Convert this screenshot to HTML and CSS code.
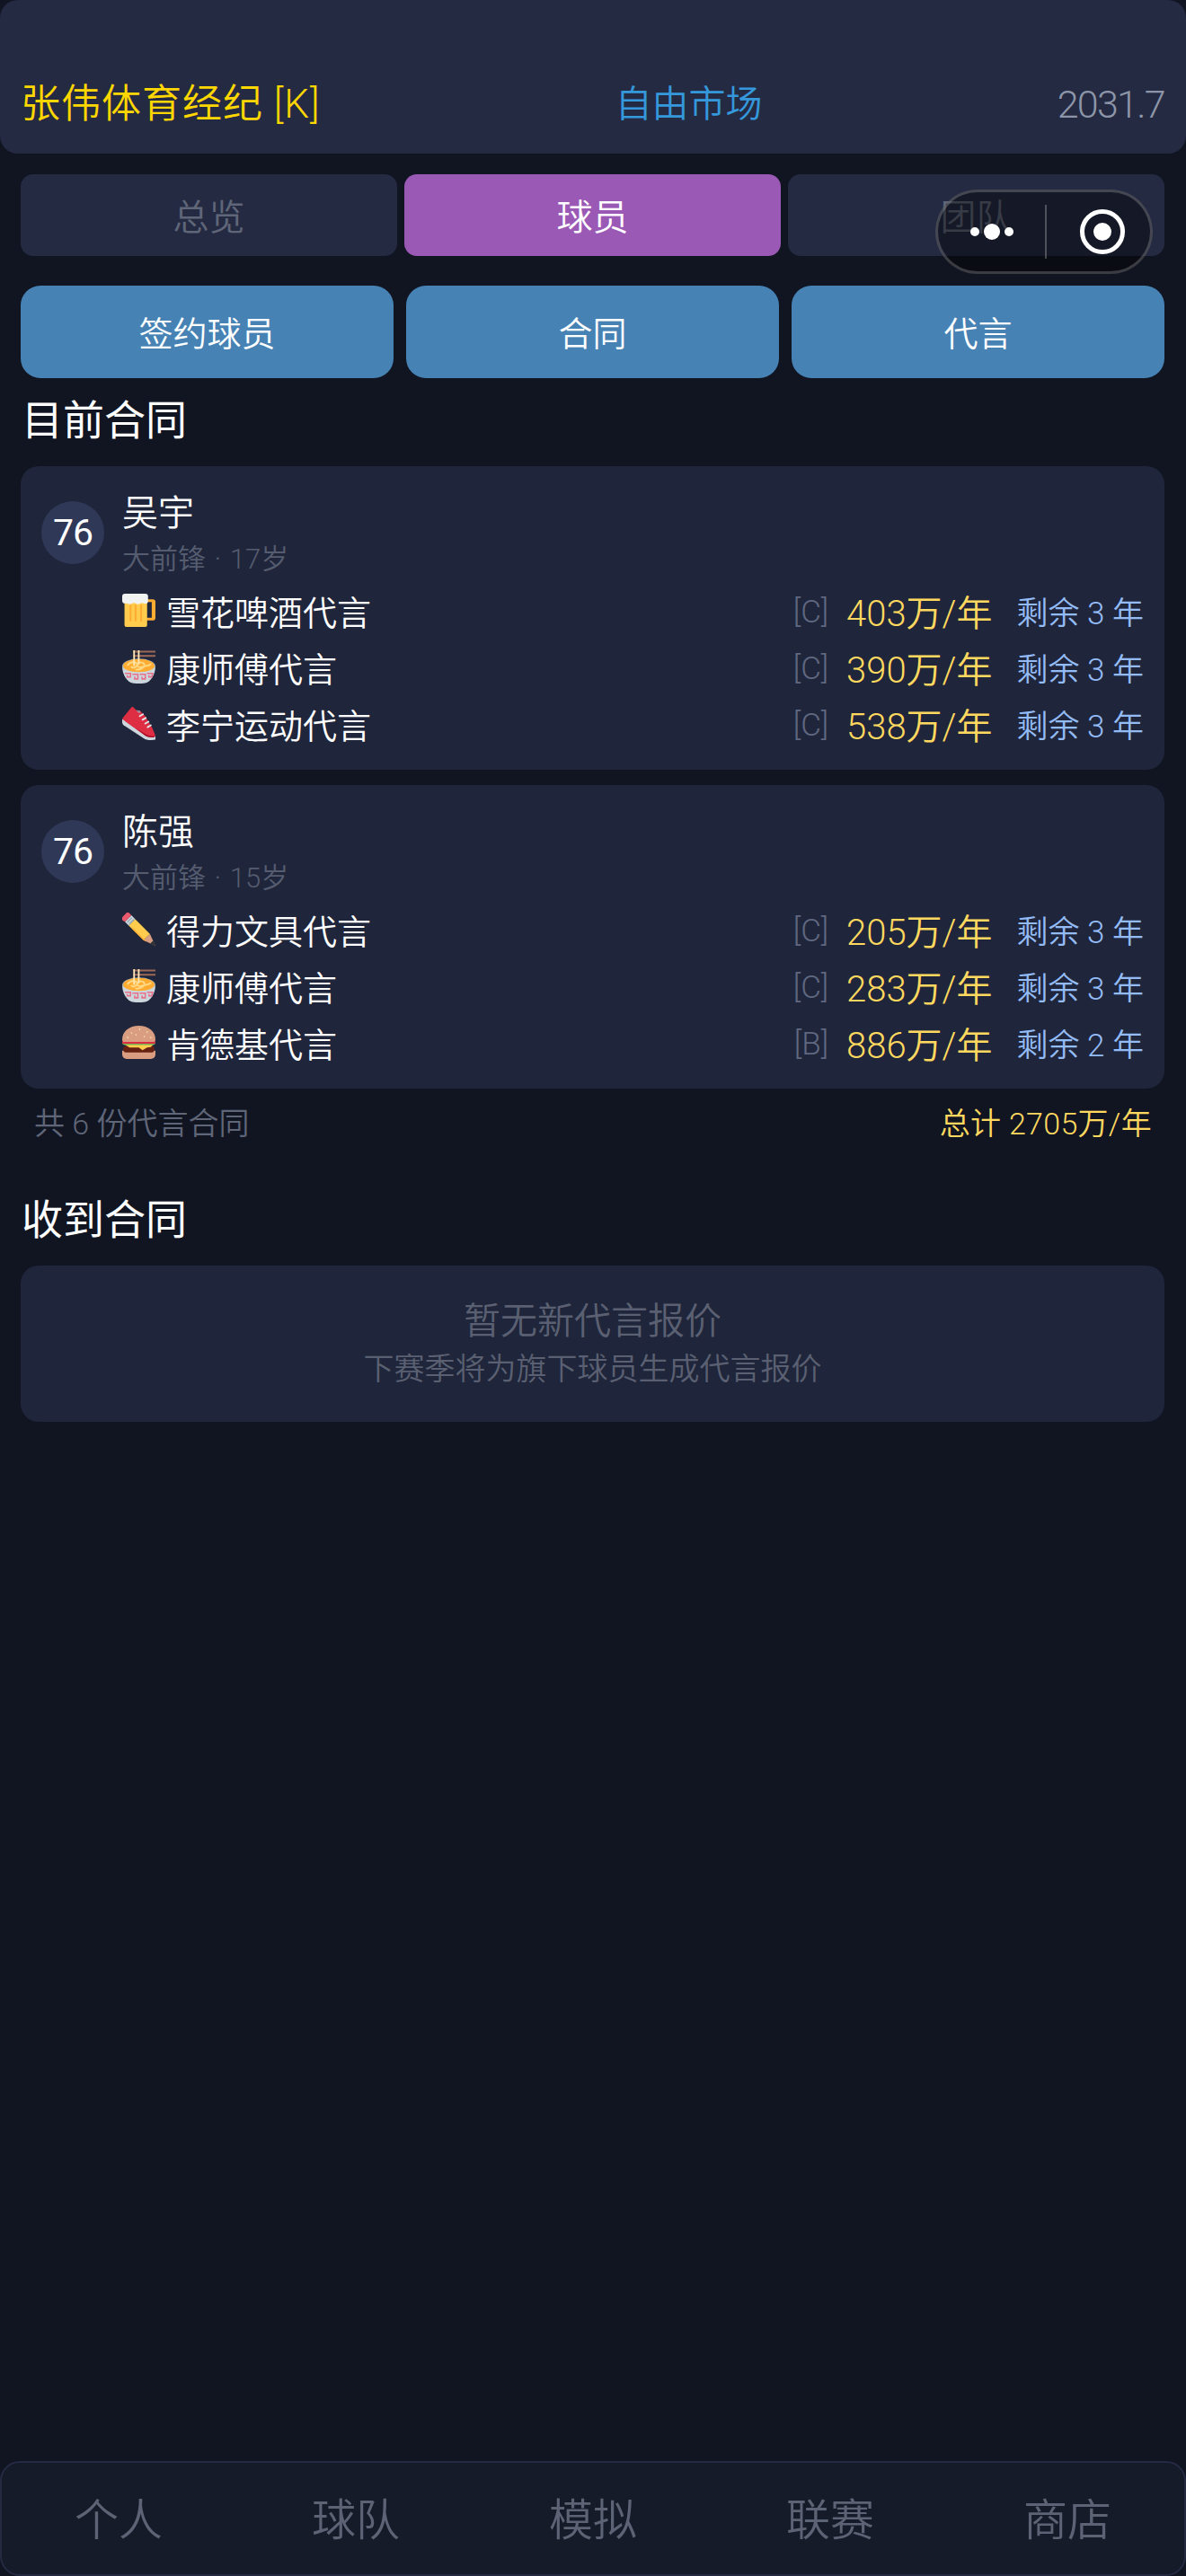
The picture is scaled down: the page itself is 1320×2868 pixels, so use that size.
FILE: index.html
```html
<!DOCTYPE html>
<html lang="zh">

<head>
    <meta charset="utf-8">
    <meta name="viewport" content="width=device-width, initial-scale=1.0">
    <title>代言</title>
    <link rel="stylesheet" href="styles.css">
</head>

<body>
    <!-- emoji -->
    <svg class="defs" width="0" height="0">
        <symbol id="beer" viewBox="0 0 36 36">
            <path fill="#FFAC33" d="M26 6h7a3 3 0 0 1 3 3v17a3 3 0 0 1-3 3h-7v-3h6V9h-6z"/>
            <path fill="#FFCC4D" d="M2.500 8h24.500v26a2 2 0 0 1-2 2H4.500a2 2 0 0 1-2-2z"/>
            <path fill="#FFAC33" d="M8 12h2v18H8zM13.500 12h2v18h-2zM19.500 12h2v18h-2z"/>
            <path fill="#F1F2F2" d="M3 0h22a3 3 0 0 1 3 3v6a3 3 0 0 1-3 2c-1.500 0-2-1-3.500-1S19 11.500 17 11.500 15 10 13 10s-3 1.500-5 1.500c-1.500 0-2-1-3-1H3a3 3 0 0 1-3-3V3a3 3 0 0 1 3-3z"/>
        </symbol>
        <symbol id="ramen" viewBox="0 0 36 36">
            <path fill="#9E6857" d="M12 0.500h24v2H12zM12 5h24v2H12z"/>
            <path fill="#CCD6DD" d="M0 17h36c0 9-5 17-11 18.500-4 .8-10 .8-14 0C5 34 0 26 0 17z"/>
            <path fill="#99AAB5" d="M0 17a18 8 0 0 1 36 0 18 5 0 0 1-36 0z"/>
            <path fill="#FFAC33" d="M1 17a17 7.500 0 0 1 34 0c0 3.500-7 6.500-17 6.500S1 20.500 1 17z"/>
            <path fill="none" stroke="#FFD983" stroke-width="1.800" stroke-linecap="round" d="M6 16c3-4 9-4 10-1s-4 5-6 3M15 21c5 0 9-2 9-5s-5-4-7-1 2 4 5 3 7-1 9-3"/>
            <path fill="#FFE8B6" d="M12 0h1.800v17H12zM17 0h1.800v15H17z"/>
            <path fill="none" stroke="#E8718A" stroke-width="1.500" d="M3 25h6v4H5.500v-2M11 26h6v5h-3.500v-2.500M19 26h6v5h-3.500v-2.500M27 25h6l-1 4h-3v-2"/>
        </symbol>
        <symbol id="shoe" viewBox="0 0 36 36">
            <path fill="#CCD6DD" d="M0 13.500v3c0 1.500 1 3 2.500 4L24 34.500c3 1.800 8 1.800 12 1V32L6 12z"/>
            <path fill="#DD2E44" d="M10 .5c.6-.7 1.500-.7 2.200 0L15 3.500c1 1 2.500 1 4 .5l5.500 5.500 8 13 3 7.500c.6 2-.5 3-2.500 3-3 0-6-.5-8.500-2L3 15.500c-1.500-1-3-2-2.700-3z"/>
            <path fill="#A0041E" d="M14 22.500l12 7.500c3 1.500 6 2 9 1.500l.5 1c-3 1-7 .5-10-1z" opacity=".8"/>
            <path fill="#99AAB5" d="M15 3.500l4 .5 1 2-2 1z" opacity=".7"/>
            <path fill="none" stroke="#E1E8ED" stroke-width="1.800" stroke-linecap="round" d="M19 10l3.500-2M22 14l3.500-2M25 18l3.500-2M27.500 22l3.500-2"/>
        </symbol>
        <symbol id="pencil" viewBox="0 0 36 36">
            <path fill="#D99E82" d="M23 30l7-7 6 13z"/>
            <path fill="#292F33" d="M33.500 30.500l-3 3 5.500 2.500z"/>
            <path fill="#FFCC4D" d="M7 14l7-7 16 16-7 7z"/>
            <path fill="#FFAC33" d="M10.500 17.500l1-1 15 15-3.500-1.500z"/>
            <path fill="#CCD6DD" d="M3 10l7-7 4 4-7 7z"/>
            <path fill="#99AAB5" d="M5 10l5-5 1 1-5 5zM7 12l5-5 1 1-5 5z"/>
            <path fill="#EA596E" d="M4.500.5L.5 4.500c-1 1.500-1 3 0 4L3 10l7-7L7.500.5c-1-1-2-1-3 0z"/>
        </symbol>
        <symbol id="burger" viewBox="0 0 36 36">
            <path fill="#D99E82" d="M0 27h36v4c0 3-2 5-5 5H5c-3 0-5-2-5-5z"/>
            <path fill="#662113" d="M1 25c0-1 1-3 3-3h28c2 0 3 2 3 3 0 2-1 4-3 4H4c-2 0-3-2-3-4z"/>
            <path fill="#FFCC4D" d="M2 20h32l-3 3-4 .5-5 3-4-3H8z"/>
            <path fill="#77B255" d="M0 18.500c0-1 1-1.500 2-1.500h32c1 0 2 .5 2 1.500S35 21 33 21H3c-2 0-3-1.500-3-2.500z"/>
            <path fill="#DD2E44" d="M1 16h34a2 2 0 0 1 0 3.500H1A2 2 0 0 1 1 16z"/>
            <path fill="#D99E82" d="M0 15C0 6 8 0 18 0s18 6 18 15c0 1.500-1 2.500-2 2.500H2c-1 0-2-1-2-2.500z"/>
            <path fill="#FFE8B6" d="M9 7l2 .5-1 1.500zM18 3l2 .5-1 1.500zM26 6l2 .5-1 1.500zM5 12l2 .5-1 1.500zM14 9l2 .5-1 1.500zM23 11l2 .5-1 1.500zM30 12l2 .5-1 1.500z"/>
        </symbol>
    </svg>

    <header class="topbar">
        <span class="agency">张伟体育经纪 [K]</span>
        <span class="market">自由市场</span>
        <span class="date">2031.7</span>
    </header>

    <nav class="tabs">
        <button class="tab">总览</button>
        <button class="tab valgt">球员</button>
        <button class="tab">团队</button>
    </nav>

    <div class="capsule">
        <span class="dots"><i></i><i class="big"></i><i></i></span>
        <span class="divider"></span>
        <span class="ring"><i></i></span>
    </div>

    <div class="actions">
        <button class="action">签约球员</button>
        <button class="action">合同</button>
        <button class="action">代言</button>
    </div>

    <main>
        <h2>目前合同</h2>

        <article class="player">
            <div class="player-head">
                <span class="rating">76</span>
                <div class="player-info">
                    <h3>吴宇</h3>
                    <p class="meta">大前锋 · 17岁</p>
                </div>
            </div>
            <div class="deal">
                <svg class="emoji"><use href="#beer"/></svg>
                <span class="brand">雪花啤酒代言</span>
                <span class="grade">[C]</span>
                <span class="price">403万/年</span>
                <span class="left">剩余 3 年</span>
            </div>
            <div class="deal">
                <svg class="emoji"><use href="#ramen"/></svg>
                <span class="brand">康师傅代言</span>
                <span class="grade">[C]</span>
                <span class="price">390万/年</span>
                <span class="left">剩余 3 年</span>
            </div>
            <div class="deal">
                <svg class="emoji"><use href="#shoe"/></svg>
                <span class="brand">李宁运动代言</span>
                <span class="grade">[C]</span>
                <span class="price">538万/年</span>
                <span class="left">剩余 3 年</span>
            </div>
        </article>

        <article class="player">
            <div class="player-head">
                <span class="rating">76</span>
                <div class="player-info">
                    <h3>陈强</h3>
                    <p class="meta">大前锋 · 15岁</p>
                </div>
            </div>
            <div class="deal">
                <svg class="emoji"><use href="#pencil"/></svg>
                <span class="brand">得力文具代言</span>
                <span class="grade">[C]</span>
                <span class="price">205万/年</span>
                <span class="left">剩余 3 年</span>
            </div>
            <div class="deal">
                <svg class="emoji"><use href="#ramen"/></svg>
                <span class="brand">康师傅代言</span>
                <span class="grade">[C]</span>
                <span class="price">283万/年</span>
                <span class="left">剩余 3 年</span>
            </div>
            <div class="deal">
                <svg class="emoji"><use href="#burger"/></svg>
                <span class="brand">肯德基代言</span>
                <span class="grade">[B]</span>
                <span class="price">886万/年</span>
                <span class="left">剩余 2 年</span>
            </div>
        </article>

        <div class="summary">
            <span>共 6 份代言合同</span>
            <span class="total">总计 2705万/年</span>
        </div>

        <h2 class="second">收到合同</h2>

        <section class="empty">
            <p class="empty-title">暂无新代言报价</p>
            <p class="empty-sub">下赛季将为旗下球员生成代言报价</p>
        </section>
    </main>

    <footer class="bottom">
        <span>个人</span>
        <span>球队</span>
        <span>模拟</span>
        <span>联赛</span>
        <span>商店</span>
    </footer>
</body></html>
```
FILE: styles.css
```css
* {
    box-sizing: border-box;
}

body {
    margin: 0;
    height: 2868px;
    position: relative;
    overflow: hidden;
    display: flex;
    flex-direction: column;
    background-color: #111522;
    color: #fff;
    font-family: "Roboto", "Noto Sans CJK SC", sans-serif;
    font-weight: 350;
}

.defs {
    position: absolute;
}

button {
    border: none;
    color: #fff;
    font-family: inherit;
    font-weight: inherit;
    padding: 0 0 2px;
}

h2, h3, p {
    margin: 0;
    font-weight: inherit;
}

.topbar {
    height: 171px;
    flex-shrink: 0;
    display: flex;
    justify-content: space-between;
    align-items: flex-end;
    padding: 0 24px 26px 23px;
    background-color: #252a43;
    border-radius: 20px;
    line-height: 58px;
}

.agency {
    color: #ffd700;
    font-size: 44px;
    letter-spacing: 1px;
}

.market {
    color: #3498db;
    font-size: 41px;
}

.date {
    color: #8d96a8;
    font-size: 43px;
    letter-spacing: -1.7px;
}

.tabs {
    display: flex;
    gap: 8px;
    padding: 23px 24px 0 23px;
}

.tab {
    flex: 1;
    height: 91px;
    border-radius: 14px;
    background-color: #252a43;
    color: #5f6678;
    font-size: 40px;
}

.tab.valgt {
    background-color: #9b59b6;
    color: #fff;
}

.capsule {
    position: absolute;
    left: 1041px;
    top: 211px;
    width: 242px;
    height: 94px;
    display: flex;
    align-items: center;
    border: 3px solid rgba(255, 255, 255, 0.2);
    border-radius: 47px;
    background-color: rgba(0, 0, 0, 0.42);
}

.dots {
    width: 119px;
    display: flex;
    justify-content: center;
    align-items: center;
    gap: 5px;
}

.dots i {
    width: 10px;
    height: 10px;
    border-radius: 50%;
    background-color: #fff;
}

.dots i.big {
    width: 18px;
    height: 18px;
}

.divider {
    width: 2px;
    height: 60px;
    background-color: rgba(255, 255, 255, 0.25);
}

.ring {
    width: 50px;
    height: 50px;
    margin-left: 37px;
    display: flex;
    justify-content: center;
    align-items: center;
    border: 5px solid #fff;
    border-radius: 50%;
}

.ring i {
    width: 20px;
    height: 20px;
    border-radius: 50%;
    background-color: #fff;
}

.actions {
    display: flex;
    gap: 14px;
    padding: 33px 24px 0 23px;
}

.action {
    flex: 1;
    height: 103px;
    border-radius: 22px;
    background-color: #4682b4;
    font-size: 38px;
}

main {
    padding: 0 24px 0 23px;
}

h2 {
    font-size: 46px;
    font-weight: 400;
    line-height: 64px;
    margin: 15px 0 19px 1px;
}

h2.second {
    margin: 55px 0 19px 1px;
}

.player {
    height: 338px;
    margin-bottom: 17px;
    padding: 22px 23px 0 23px;
    background-color: #1f253a;
    border-radius: 20px;
}

.player-head {
    display: flex;
    align-items: center;
    gap: 20px;
    height: 104px;
    margin-bottom: 3px;
}

.player-info {
    padding-top: 8px;
}

.rating {
    width: 70px;
    height: 70px;
    display: flex;
    justify-content: center;
    align-items: center;
    border-radius: 50%;
    background-color: #2f3857;
    font-size: 41px;
    font-weight: 400;
    letter-spacing: -1px;
}

h3 {
    font-size: 40px;
    line-height: 52px;
}

.meta {
    color: #555c70;
    font-size: 31px;
    line-height: 50px;
    word-spacing: 2px;
}

.deal {
    height: 63px;
    display: flex;
    align-items: center;
    padding-left: 90px;
}

.emoji {
    width: 37px;
    height: 37px;
    flex-shrink: 0;
    margin-right: 12px;
}

.brand {
    flex: 1;
    font-size: 38px;
}

.grade {
    color: #5f6880;
    font-size: 35px;
    padding-top: 4px;
    margin-right: 20px;
}

.price {
    color: #ffd95f;
    font-size: 40px;
    margin-right: 27px;
}

.left {
    color: #93bbf5;
    font-size: 35px;
}

.summary {
    display: flex;
    justify-content: space-between;
    padding: 2px 14px 0 15px;
    color: #5f6678;
    font-size: 34px;
    line-height: 40px;
}

.total {
    color: #ffd95f;
    letter-spacing: 0.3px;
}

.empty {
    height: 174px;
    padding-top: 3px;
    display: flex;
    flex-direction: column;
    justify-content: center;
    align-items: center;
    background-color: #1f253a;
    border-radius: 20px;
}

.empty-title {
    color: #5a6072;
    font-size: 41px;
    line-height: 53px;
}

.empty-sub {
    color: #5a6072;
    font-size: 34px;
    line-height: 53px;
}

.bottom {
    margin-top: auto;
    height: 128px;
    padding-bottom: 5px;
    display: grid;
    grid-template-columns: repeat(5, 264px);
    justify-content: center;
    align-items: center;
    justify-items: center;
    background-color: #161b2a;
    border: 2px solid #252a43;
    border-radius: 22px;
    color: #5c6374;
    font-size: 49px;
}
```
